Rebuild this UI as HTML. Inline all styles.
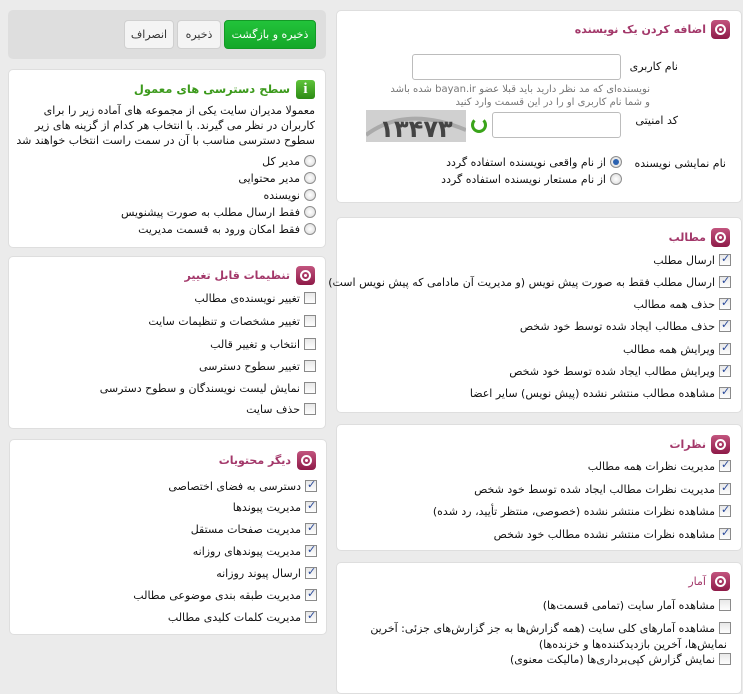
<!DOCTYPE html>
<html><head><meta charset="utf-8">
<style>
html,body{margin:0;padding:0;}
body{width:743px;height:683px;background:#ebebeb;position:relative;overflow:hidden;
font-family:"DejaVu Sans","Liberation Sans","Noto Sans CJK SC",sans-serif;font-size:11px;color:#111;}
.p{position:absolute;background:#fff;border:1px solid #dedede;border-radius:5px;}
.a{position:absolute;direction:rtl;white-space:nowrap;}
.h{position:absolute;direction:rtl;white-space:nowrap;font-weight:bold;font-size:11px;color:#a3386a;}
.ic{position:absolute;width:19px;height:19px;border-radius:4px;background:linear-gradient(#c2547e,#8e1a48);}
.ic:after{content:"";position:absolute;left:4px;top:4px;width:7px;height:7px;border:2px solid #fff;border-radius:50%;}
.ic:before{content:"";position:absolute;left:8px;top:8px;width:3px;height:3px;background:#fff;border-radius:50%;}
.cb{display:inline-block;width:10px;height:10px;border:1px solid #8a8a8a;background:linear-gradient(#e8e8e8,#fdfdfd);vertical-align:-2px;margin-left:4px;position:relative;}
.cb.c:after{content:"✓";position:absolute;left:1px;top:-3px;font-size:11px;color:#2a4a9a;font-weight:bold;}
.rd{display:inline-block;width:10px;height:10px;border:1px solid #8e8e8e;border-radius:50%;background:radial-gradient(#fff,#d8d8d8);vertical-align:-2px;margin-left:4px;position:relative;}
.rd.c:after{content:"";position:absolute;left:2px;top:2px;width:6px;height:6px;border-radius:50%;background:#2c62b0;}
.btn{position:absolute;height:27px;border:1px solid #d0d0d0;border-radius:4px;background:#f4f4f4;text-align:center;line-height:27px;font-size:11px;color:#333;direction:rtl;}
.in{position:absolute;height:24px;border:1px solid #bcbcbc;border-radius:3px;background:#fff;}
</style></head><body>

<div style="position:absolute;left:8px;top:10px;width:318px;height:49px;background:#dedede;border-radius:5px;"></div>
<div class="btn" style="left:224px;top:20px;width:90px;background:linear-gradient(#22c33a,#14a829);border-color:#139a26;color:#fff;">ذخیره و بازگشت</div>
<div class="btn" style="left:177px;top:20px;width:42px;">ذخیره</div>
<div class="btn" style="left:124px;top:20px;width:48px;">انصراف</div>

<div class="p" style="left:8px;top:69px;width:316px;height:177px;"></div>
<div style="position:absolute;left:296px;top:80px;width:19px;height:19px;border-radius:3px;background:linear-gradient(#5fc43a,#2c8a14);color:#fff;font-weight:bold;font-family:'Liberation Serif',serif;font-size:15px;text-align:center;line-height:19px;">i</div>
<div class="h" style="right:453px;top:82px;color:#3c9a1c;font-size:11.5px;">سطح دسترسی های معمول</div>
<div class="a" style="right:428px;top:103px;line-height:15px;font-size:11px;text-align:right;">معمولا مدیران سایت یکی از مجموعه های آماده زیر را برای<br>کاربران در نظر می گیرند. با انتخاب هر کدام از گزینه های زیر<br>سطوح دسترسی مناسب با آن در سمت راست انتخاب خواهند شد</div>
<div class="a" style="right:427px;top:155px;"><span class="rd"></span>مدیر کل</div>
<div class="a" style="right:427px;top:172px;"><span class="rd"></span>مدیر محتوایی</div>
<div class="a" style="right:427px;top:189px;"><span class="rd"></span>نویسنده</div>
<div class="a" style="right:427px;top:206px;"><span class="rd"></span>فقط ارسال مطلب به صورت پیشنویس</div>
<div class="a" style="right:427px;top:223px;"><span class="rd"></span>فقط امکان ورود به قسمت مدیریت</div>

<div class="p" style="left:8px;top:256px;width:316px;height:171px;"></div>
<div class="ic" style="left:296px;top:266px;"></div>
<div class="h" style="right:453px;top:269px;">تنظیمات قابل تغییر</div>
<div class="a" style="right:427px;top:292px;"><span class="cb"></span>تغییر نویسنده‌ی مطالب</div>
<div class="a" style="right:427px;top:315px;"><span class="cb"></span>تغییر مشخصات و تنظیمات سایت</div>
<div class="a" style="right:427px;top:338px;"><span class="cb"></span>انتخاب و تغییر قالب</div>
<div class="a" style="right:427px;top:360px;"><span class="cb"></span>تغییر سطوح دسترسی</div>
<div class="a" style="right:427px;top:382px;"><span class="cb"></span>نمایش لیست نویسندگان و سطوح دسترسی</div>
<div class="a" style="right:427px;top:403px;"><span class="cb"></span>حذف سایت</div>

<div class="p" style="left:9px;top:439px;width:316px;height:194px;"></div>
<div class="ic" style="left:297px;top:451px;"></div>
<div class="h" style="right:452px;top:454px;">دیگر محتویات</div>
<div class="a" style="right:426px;top:480px;"><span class="cb c"></span>دسترسی به فضای اختصاصی</div>
<div class="a" style="right:426px;top:501px;"><span class="cb c"></span>مدیریت پیوندها</div>
<div class="a" style="right:426px;top:523px;"><span class="cb c"></span>مدیریت صفحات مستقل</div>
<div class="a" style="right:426px;top:545px;"><span class="cb c"></span>مدیریت پیوندهای روزانه</div>
<div class="a" style="right:426px;top:567px;"><span class="cb c"></span>ارسال پیوند روزانه</div>
<div class="a" style="right:426px;top:589px;"><span class="cb c"></span>مدیریت طبقه بندی موضوعی مطالب</div>
<div class="a" style="right:426px;top:611px;"><span class="cb c"></span>مدیریت کلمات کلیدی مطالب</div>

<div class="p" style="left:336px;top:10px;width:404px;height:191px;"></div>
<div class="ic" style="left:711px;top:20px;"></div>
<div class="h" style="right:37px;top:23px;">اضافه کردن یک نویسنده</div>
<div class="a" style="right:65px;top:60px;">نام کاربری</div>
<div class="in" style="left:412px;top:54px;width:207px;"></div>
<div class="a" style="right:93px;top:83px;color:#777;font-size:10px;line-height:13px;">نویسنده‌ای که مد نظر دارید باید قبلا عضو bayan.ir شده باشد<br>و شما نام کاربری او را در این قسمت وارد کنید</div>
<div class="a" style="right:65px;top:114px;">کد امنیتی</div>
<div class="in" style="left:492px;top:112px;width:127px;"></div>
<div style="position:absolute;left:471px;top:117px;width:16px;height:16px;border-radius:50%;border:3px solid #3aa41a;border-top-color:transparent;box-sizing:border-box;"></div>
<svg style="position:absolute;left:366px;top:110px" width="100" height="32"><rect width="100" height="32" fill="#d0d0d0"/><path d="M0 25 Q40 -5 100 20" stroke="#aaa" stroke-width="4" fill="none"/><text x="50" y="27" font-size="24" font-weight="bold" fill="#444" text-anchor="middle" font-family="DejaVu Sans">۱۳۴۷۳</text></svg>
<div class="a" style="right:17px;top:157px;">نام نمایشی نویسنده</div>
<div class="a" style="right:121px;top:156px;"><span class="rd c"></span>از نام واقعی نویسنده استفاده گردد</div>
<div class="a" style="right:121px;top:173px;"><span class="rd"></span>از نام مستعار نویسنده استفاده گردد</div>

<div class="p" style="left:336px;top:217px;width:404px;height:194px;"></div>
<div class="ic" style="left:711px;top:228px;"></div>
<div class="h" style="right:37px;top:231px;">مطالب</div>
<div class="a" style="right:12px;top:254px;"><span class="cb c"></span>ارسال مطلب</div>
<div class="a" style="right:12px;top:276px;"><span class="cb c"></span>ارسال مطلب فقط به صورت پیش نویس (و مدیریت آن مادامی که پیش نویس است)</div>
<div class="a" style="right:12px;top:298px;"><span class="cb c"></span>حذف همه مطالب</div>
<div class="a" style="right:12px;top:320px;"><span class="cb c"></span>حذف مطالب ایجاد شده توسط خود شخص</div>
<div class="a" style="right:12px;top:343px;"><span class="cb c"></span>ویرایش همه مطالب</div>
<div class="a" style="right:12px;top:365px;"><span class="cb c"></span>ویرایش مطالب ایجاد شده توسط خود شخص</div>
<div class="a" style="right:12px;top:387px;"><span class="cb c"></span>مشاهده مطالب منتشر نشده (پیش نویس) سایر اعضا</div>

<div class="p" style="left:336px;top:424px;width:404px;height:125px;"></div>
<div class="ic" style="left:711px;top:435px;"></div>
<div class="h" style="right:37px;top:438px;">نظرات</div>
<div class="a" style="right:12px;top:460px;"><span class="cb c"></span>مدیریت نظرات همه مطالب</div>
<div class="a" style="right:12px;top:483px;"><span class="cb c"></span>مدیریت نظرات مطالب ایجاد شده توسط خود شخص</div>
<div class="a" style="right:12px;top:505px;"><span class="cb c"></span>مشاهده نظرات منتشر نشده (خصوصی، منتظر تأیید، رد شده)</div>
<div class="a" style="right:12px;top:528px;"><span class="cb c"></span>مشاهده نظرات منتشر نشده مطالب خود شخص</div>

<div class="p" style="left:336px;top:562px;width:404px;height:130px;"></div>
<div class="ic" style="left:711px;top:572px;"></div>
<div class="h" style="right:37px;top:575px;font-weight:normal;">آمار</div>
<div class="a" style="right:12px;top:599px;"><span class="cb"></span>مشاهده آمار سایت (تمامی قسمت‌ها)</div>
<div class="a" style="right:12px;top:622px;"><span class="cb"></span>مشاهده آمارهای کلی سایت (همه گزارش‌ها به جز گزارش‌های جزئی: آخرین</div>
<div class="a" style="right:16px;top:638px;">نمایش‌ها، آخرین بازدیدکننده‌ها و خزنده‌ها)</div>
<div class="a" style="right:12px;top:653px;"><span class="cb"></span>نمایش گزارش کپی‌برداری‌ها (مالیکت معنوی)</div>

</body></html>
